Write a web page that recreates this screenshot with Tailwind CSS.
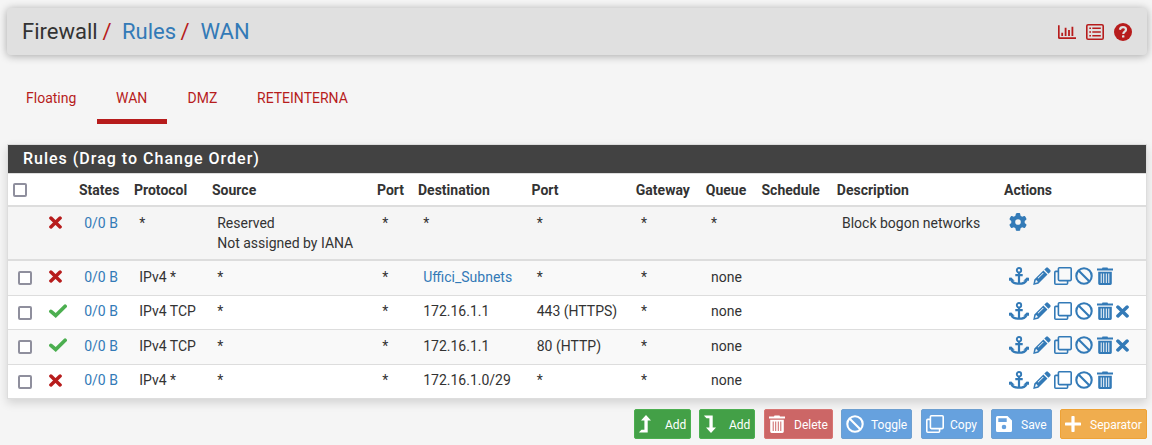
<!DOCTYPE html>
<html lang="en">
<head>
<meta charset="utf-8">
<title>Firewall: Rules: WAN</title>
<script src="https://cdn.jsdelivr.net/npm/@tailwindcss/browser@4"></script>
</head>
<body class="bg-[#f5f5f5] font-[Roboto,sans-serif] text-[14px] leading-5 text-[#333] h-[445px] overflow-hidden">
<svg class="hidden">
  <symbol id="times" viewBox="0 0 13 13"><path d="M1.900 2.100 11.100 10.900M11.100 2.100 1.900 10.900" fill="none" stroke="currentColor" stroke-width="3.500" stroke-linecap="round"/></symbol>
  <symbol id="check" viewBox="0 0 18 14"><path d="M1.900 7.400 6.700 11.500 16.100 2.300" fill="none" stroke="currentColor" stroke-width="3.700" stroke-linecap="round"/></symbol>
  <symbol id="gear" viewBox="0 0 512 512"><path d="M495.9 166.6c3.2 8.7 .5 18.4-6.4 24.6l-43.3 39.4c1.1 8.3 1.7 16.8 1.7 25.4s-.6 17.1-1.7 25.4l43.3 39.4c6.9 6.2 9.6 15.9 6.4 24.6c-4.4 11.9-9.7 23.3-15.8 34.3l-4.7 8.1c-6.6 11-14 21.4-22.1 31.2c-5.9 7.2-15.7 9.6-24.5 6.8l-55.7-17.7c-13.4 10.3-28.2 18.9-44 25.4l-12.5 57.1c-2 9.1-9 16.3-18.2 17.8c-13.8 2.3-28 3.5-42.5 3.5s-28.7-1.2-42.5-3.5c-9.2-1.5-16.2-8.7-18.2-17.8l-12.5-57.1c-15.8-6.5-30.6-15.1-44-25.4L83.1 425.9c-8.8 2.8-18.6 .3-24.5-6.8c-8.1-9.8-15.5-20.2-22.1-31.2l-4.7-8.1c-6.1-11-11.4-22.4-15.8-34.3c-3.2-8.7-.5-18.4 6.4-24.6l43.3-39.4C64.6 273.1 64 264.6 64 256s.6-17.1 1.7-25.4L22.4 191.2c-6.9-6.2-9.6-15.9-6.4-24.6c4.4-11.9 9.7-23.3 15.8-34.3l4.7-8.1c6.6-11 14-21.4 22.1-31.2c5.9-7.2 15.7-9.6 24.5-6.8l55.7 17.7c13.4-10.3 28.2-18.9 44-25.4l12.5-57.1c2-9.1 9-16.3 18.2-17.8C227.3 1.2 241.5 0 256 0s28.7 1.2 42.5 3.5c9.2 1.5 16.2 8.7 18.2 17.8l12.5 57.1c15.8 6.5 30.6 15.1 44 25.4l55.7-17.7c8.8-2.8 18.6-.3 24.5 6.8c8.1 9.8 15.5 20.2 22.1 31.2l4.7 8.1c6.1 11 11.4 22.4 15.8 34.3zM256 336a80 80 0 1 0 0-160 80 80 0 1 0 0 160z"/></symbol>
  <symbol id="anchor" viewBox="0 0 20 18"><g fill="none" stroke="currentColor"><circle cx="10" cy="3.200" r="2.200" stroke-width="1.900"/><path d="M10 5.500V16.500M6.300 8.200h7.400" stroke-width="2.200"/><path d="M2.400 13.200C3.600 15.800 6.600 16.700 10 16.700s6.400-.9 7.600-3.500" stroke-width="2.300"/></g><path d="M0 13.700V10.800h.5L2.300 10.500 5.700 13.700zM20 13.700V10.800h-.5L17.700 10.500 14.300 13.700z"/></symbol>
  <symbol id="pencil" viewBox="0 0 18 18"><path fill-rule="evenodd" d="M13.200.700Q14 0 14.900.700L17.300 3.100Q18 4 17.300 4.900L15.400 6.700 11.300 2.600ZM10.400 3.500 14.500 7.600 5.300 16.700.2 17.900 1.300 12.600ZM2.800 13.300 2.100 16 4.700 15.300V14.200H3.900V13.300ZM10 5.700 4.700 11 5.300 11.600 10.600 6.300Z"/></symbol>
  <symbol id="clone" viewBox="0 0 18 18"><g fill="none" stroke="currentColor" stroke-width="1.600"><rect x="4.400" y=".8" width="12.800" height="12.800" rx="1"/><path d="M4.200 4.400H1.800Q.8 4.400.8 5.400V16.200Q.8 17.200 1.800 17.200H12.600Q13.600 17.200 13.600 16.200V13.800"/></g></symbol>
  <symbol id="ban" viewBox="0 0 18 18"><g fill="none" stroke="currentColor" stroke-width="2.100"><circle cx="9" cy="9" r="7.700"/><path d="M3.500 3.500 14.500 14.500"/></g></symbol>
  <symbol id="trash" viewBox="0 0 16 18"><path fill-rule="evenodd" d="M0 1.500H5L5.500.400H10.500L11 1.500H16V3.500H0ZM1.200 4.800H14.800V16.600Q14.800 18 13.400 18H2.600Q1.200 18 1.200 16.600ZM3.700 6.500V16H4.700V6.500ZM6.200 6.500V16H7.200V6.500ZM8.800 6.500V16H9.800V6.500ZM11.300 6.500V16H12.300V6.500Z"/></symbol>
  <symbol id="up" viewBox="0 0 12 18"><path d="M7 0 12 5.500H8.700V17.500H.5L0 17.200 2.500 14.800H5.400V5.500H2Z"/></symbol>
  <symbol id="down" viewBox="0 0 12 18"><path d="M7 18 12 12.500H8.700V.5H.5L0 .8 2.500 3.200H5.400V12.500H2Z"/></symbol>
  <symbol id="save" viewBox="0 0 16 16"><path fill-rule="evenodd" d="M1.500 0H11.500L16 4.500V14.500Q16 16 14.500 16H1.500Q0 16 0 14.500V1.500Q0 0 1.500 0ZM2.300 2.200V6H10.700V2.200ZM8 8.700A2.300 2.300 0 1 0 8 13.300 2.300 2.300 0 1 0 8 8.700Z"/></symbol>
  <symbol id="plus" viewBox="0 0 16 16"><path d="M6.400.7Q6.400 0 7.100 0H8.900Q9.600 0 9.600.7V6.400H15.300Q16 6.400 16 7.100V8.900Q16 9.600 15.300 9.600H9.600V15.300Q9.600 16 8.900 16H7.100Q6.400 16 6.400 15.300V9.600H.7Q0 9.600 0 8.900V7.100Q0 6.400.7 6.400H6.400Z"/></symbol>
</svg>

<header class="ml-[7px] w-[1140px] mt-2 h-[47px] rounded bg-[#e0e0e0] shadow-[0_1px_9px_rgba(0,0,0,0.32)] flex items-center justify-between pl-[15px] pr-[15px]">
  <h1 class="flex text-[22px] leading-6 text-[#333]">
    <span class="w-[80.5px]">Firewall</span><span class="w-[19.5px] text-[#b71c1c]">/</span><span class="w-[58.5px] text-[#337ab7]">Rules</span><span class="w-[20px] text-[#b71c1c]">/</span><span class="text-[#337ab7]">WAN</span>
  </h1>
  <div class="flex items-center gap-[10px] text-[#b71c1c]">
    <svg class="w-[18px] h-[18px]" viewBox="0 0 18 18" fill="none" stroke="currentColor"><path d="M.8 2.300V14.500Q.8 15.200 1.500 15.200H18" stroke-width="1.700"/><path d="M4.200 12.900V9.700M7.600 12.900V4.700M11 12.900V7M14.400 12.900V3.700" stroke-width="1.800"/></svg>
    <svg class="w-[18px] h-[18px]" viewBox="0 0 18 18" fill="none" stroke="currentColor"><rect x=".8" y="1.800" width="16.400" height="14.400" rx="1.300" stroke-width="1.600"/><path d="M3.300 5.300h1.700M3.300 9h1.700M3.300 12.700h1.700M6.300 5.300h8.500M6.300 9h8.500M6.300 12.700h8.500" stroke-width="1.600"/></svg>
    <svg class="w-[18px] h-[18px]" viewBox="0 0 18 18"><circle cx="9" cy="9" r="9" fill="currentColor"/><path d="M5.900 6.700C6.200 5 7.300 4.200 9 4.200c1.800 0 3 1 3 2.500 0 2-2.700 2-2.700 4.200" fill="none" stroke="#e0e0e0" stroke-width="2.200"/><rect x="8" y="12.300" width="2.400" height="2.300" rx=".4" fill="#e0e0e0"/></svg>
  </div>
</header>

<nav class="flex ml-[7px] mt-[33px] h-[36px] text-[#b71c1c]">
  <a class="w-[90px] pl-[19px]">Floating</a>
  <a class="w-[70px] pl-[19px] border-b-[5px] border-[#b71c1c]">WAN</a>
  <a class="w-[70px] pl-[20.5px]">DMZ</a>
  <a class="pl-5">RETEINTERNA</a>
</nav>

<main class="mx-[7px] w-[1140px] mt-5 h-[255px] border border-[#ddd] bg-white shadow-[0_4px_9px_rgba(0,0,0,0.14)] text-[#333]">
  <h2 class="h-7 bg-[#424242] text-white text-[16px] font-medium leading-[27px] tracking-[1px] pl-[15px]">Rules (Drag to Change Order)</h2>
  <div class="grid grid-cols-[71px_55px_78px_165px_41px_113.5px_104.300px_70px_55.700px_75.300px_167.200px_1fr] h-[34px] border-t border-b-2 border-[#ddd] pt-[6px] font-bold">
    <span class="pl-[5px] pt-[3px]"><i class="block size-[14px] rounded-[2px] border-2 border-[#8f8f9d] bg-white"></i></span>
    <span>States</span><span>Protocol</span><span>Source</span><span>Port</span><span>Destination</span><span>Port</span><span>Gateway</span><span>Queue</span><span>Schedule</span><span>Description</span><span>Actions</span>
  </div>
  <div id="rows"></div>
</main>

<footer class="flex mt-[10px] ml-[634px] text-[12px] leading-[18px] text-white">
  <button class="w-[57px] h-[30px] mr-2 rounded-[2px] border border-[#4caf50] bg-[#43a047] flex items-center pl-1"><svg class="w-3 h-[18px] mr-[14px] shrink-0 fill-current"><use href="#up"/></svg><span class="pt-[2px]">Add</span></button>
  <button class="w-[56px] h-[30px] mr-[9px] rounded-[2px] border border-[#4caf50] bg-[#43a047] flex items-center pl-1"><svg class="w-3 h-[18px] mr-[13px] shrink-0 fill-current"><use href="#down"/></svg><span class="pt-[2px]">Add</span></button>
  <button class="w-[69px] h-[30px] mr-2 rounded-[2px] border border-[#d87573] bg-[#cc6666] flex items-center pl-1"><svg class="w-4 h-[18px] mr-[9px] shrink-0 fill-current"><use href="#trash"/></svg><span class="pt-[2px]">Delete</span></button>
  <button class="w-[71px] h-[30px] mr-[9px] rounded-[2px] border border-[#6d9fd0] bg-[#66a1de] flex items-center pl-1"><svg class="size-[18px] mr-[7px] shrink-0 fill-current"><use href="#ban"/></svg><span class="pt-[2px]">Toggle</span></button>
  <button class="w-[62px] h-[30px] mr-2 rounded-[2px] border border-[#6d9fd0] bg-[#66a1de] flex items-center pl-1"><svg class="size-[18px] mr-[6px] shrink-0 fill-current"><use href="#clone"/></svg><span class="pt-[2px]">Copy</span></button>
  <button class="w-[61px] h-[30px] mr-2 rounded-[2px] border border-[#6d9fd0] bg-[#66a1de] flex items-center pl-1"><svg class="size-4 mr-[9px] shrink-0 fill-current"><use href="#save"/></svg><span class="pt-[2px]">Save</span></button>
  <button class="w-[87px] h-[30px] rounded-[2px] border border-[#eea236] bg-[#f0ad4e] flex items-center pl-1"><svg class="size-4 mr-[9px] shrink-0 fill-current"><use href="#plus"/></svg><span class="pt-[2px]">Separator</span></button>
</footer>

<script>
const X = '<svg class="size-[13px] text-[#b71c1c]"><use href="#times"/></svg>';
const OK = '<svg class="w-[18px] h-[14px] text-[#4caf50]"><use href="#check"/></svg>';
const BOX = '<i class="block size-[14px] rounded-[2px] border-2 border-[#8f8f9d] bg-white"></i>';
const TOOLS = '<svg class="w-5 h-[18px] mr-1"><use href="#anchor"/></svg><svg class="size-[18px] mr-[3px]"><use href="#pencil"/></svg><svg class="size-[18px] mr-[3.5px]"><use href="#clone"/></svg><svg class="size-[18px] mr-[3.5px]"><use href="#ban"/></svg><svg class="w-4 h-[18px] mr-[3px]"><use href="#trash"/></svg>';
const DEL = '<svg class="size-[13px] mt-[3px]"><use href="#times"/></svg>';
const GEAR = '<svg class="size-[18px]"><use href="#gear"/></svg>';
const link = t => `<a class="text-[#337ab7]">${t}</a>`;
const rules = [
  { row: 'h-[54px] border-b-2 bg-[#f5f5f5]', text: 'pt-[6px]', icon: 'pt-[9px]', state: X, box: '', tools: GEAR, cells: ['*', 'Reserved<br>Not assigned by IANA', '*', '*', '*', '*', '*', '', 'Block bogon networks'] },
  { row: 'h-[35px] border-b bg-[#f9f9f9]', text: 'pt-[6px]', icon: 'pt-[9px]', state: X, box: BOX, tools: TOOLS, cells: ['IPv4 *', '*', '*', link('Uffici_Subnets'), '*', '*', 'none', '', ''] },
  { row: 'h-[34px] border-b bg-white', text: 'pt-[5px]', icon: 'pt-[8px]', state: OK, box: BOX, tools: TOOLS + DEL, cells: ['IPv4 TCP', '*', '*', '172.16.1.1', '443 (HTTPS)', '*', 'none', '', ''] },
  { row: 'h-[35px] border-b bg-[#f9f9f9]', text: 'pt-[6px]', icon: 'pt-[8px]', state: OK, box: BOX, tools: TOOLS + DEL, cells: ['IPv4 TCP', '*', '*', '172.16.1.1', '80 (HTTP)', '*', 'none', '', ''] },
  { row: 'h-[33px] bg-white', text: 'pt-[5px]', icon: 'pt-[9px]', state: X, box: BOX, tools: TOOLS, cells: ['IPv4 *', '*', '*', '172.16.1.0/29', '*', '*', 'none', '', ''] }
];
document.getElementById('rows').innerHTML = rules.map(r => `
  <div class="grid grid-cols-[71px_55px_78px_165px_41px_113.5px_104.300px_70px_55.700px_75.300px_167.200px_1fr] border-[#ddd] ${r.row}">
    <span class="flex pl-[10px]"><span class="w-[30.6px] pt-[10px]">${r.box}</span><span class="${r.icon}">${r.state}</span></span>
    ${[link('0/0 B'), ...r.cells].map(c => `<span class="pl-[5.2px] whitespace-nowrap ${r.text}">${c}</span>`).join('')}
    <span class="flex items-start pl-[5px] pt-[6px] text-[#337ab7] fill-current">${r.tools}</span>
  </div>`).join('');
</script>
</body>
</html>
